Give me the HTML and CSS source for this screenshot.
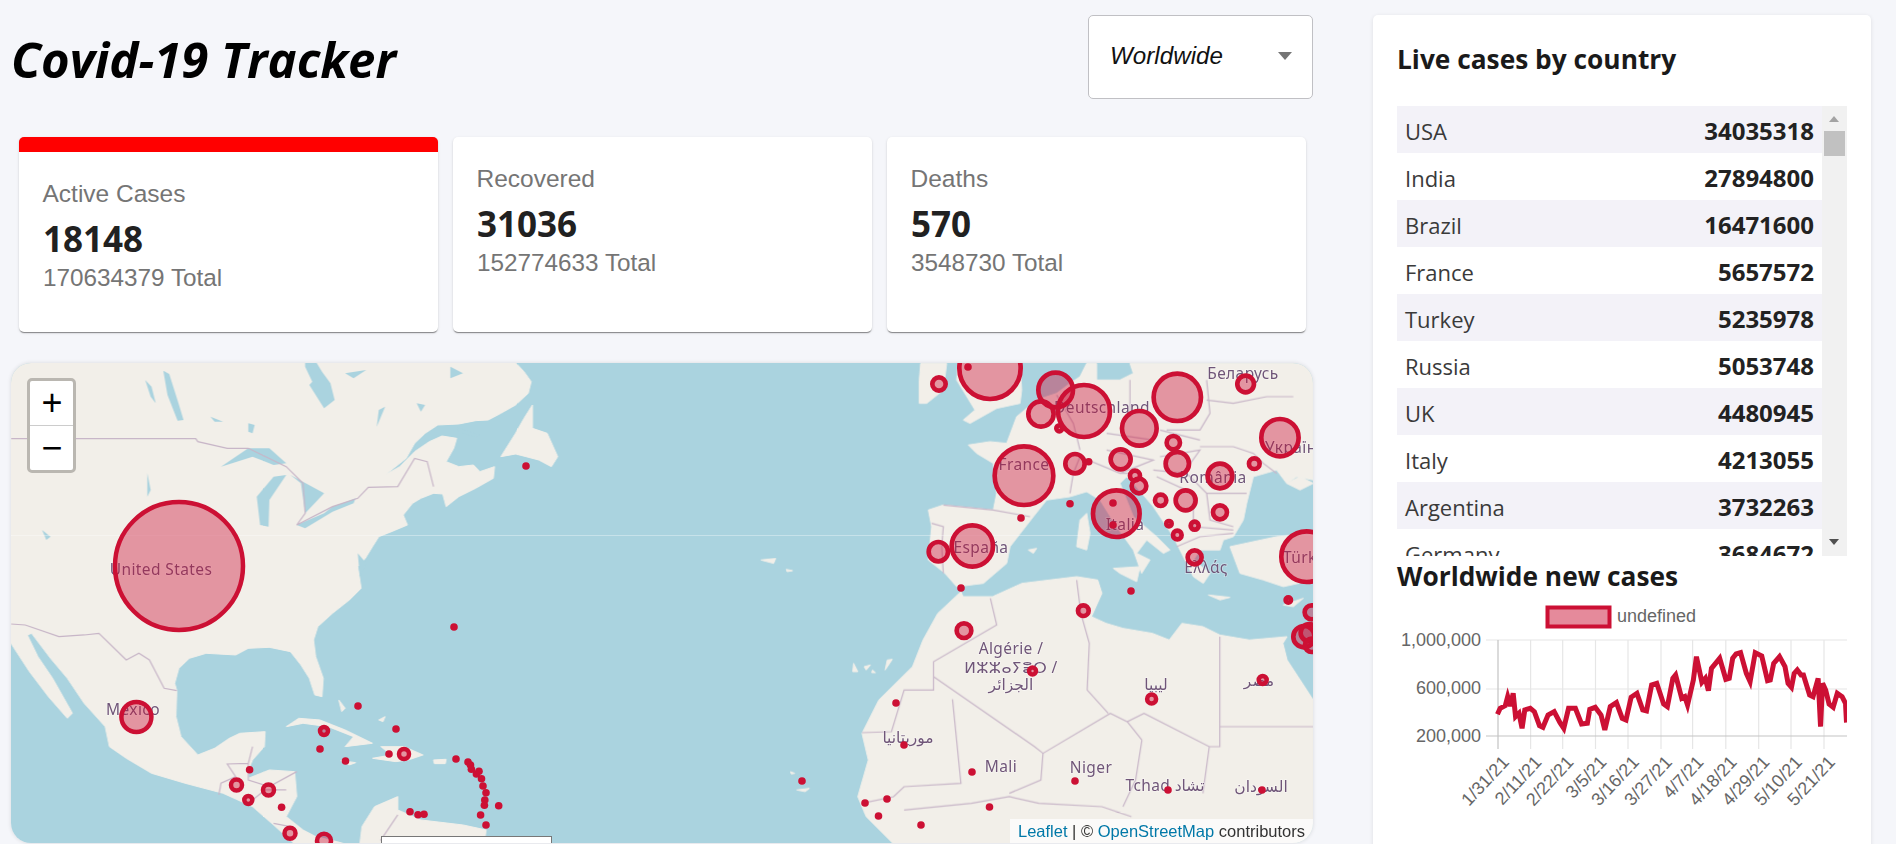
FILE: index.html
```html
<!DOCTYPE html>
<html lang="en">
<head>
<meta charset="utf-8">
<title>Covid-19 Tracker</title>
<link rel="stylesheet" href="styles.css">
</head>
<body>
<div class="app">
  <main class="left">
    <header class="header">
      <h1 class="title">Covid-19 Tracker</h1>
      <div class="select"><span class="select-value">Worldwide</span><span class="select-arrow"></span></div>
    </header>
    <section class="stats">
      <article class="stat stat-active">
        <div class="stat-label">Active Cases</div>
        <div class="stat-num">18148</div>
        <div class="stat-total">170634379 Total</div>
      </article>
      <article class="stat">
        <div class="stat-label">Recovered</div>
        <div class="stat-num">31036</div>
        <div class="stat-total">152774633 Total</div>
      </article>
      <article class="stat">
        <div class="stat-label">Deaths</div>
        <div class="stat-num">570</div>
        <div class="stat-total">3548730 Total</div>
      </article>
    </section>
    <section class="map">
      <svg class="map-svg" viewBox="11 363 1302 480" width="1302" height="480" aria-hidden="true">
        <rect class="water" x="11" y="363" width="1302" height="480"/>
        <g class="tiles">
          <g transform="translate(0 350) scale(.4209 .3333)">
            <path class="land" d="M26 38L1225 38L1245 65L1262 95L1255 130L1225 165L1190 190L1160 210L1130 212L1090 222L1040 225L1010 250L985 280L965 325L935 355L915 375L950 350L985 305L1020 275L1050 258L1085 265L1078 295L1060 335L1090 350L1125 345L1140 365L1175 350L1172 385L1130 415L1090 440L1060 470L1052 432L1030 430L1000 445L980 460L958 495L968 525L930 545L900 560L885 590L868 625L850 650L858 715L830 750L790 790L755 830L745 870L750 920L768 985L765 1040L748 1035L735 985L715 945L690 905L640 892L590 895L560 915L490 910L450 925L425 955L415 1000L420 1022L418 1100L430 1160L470 1215L510 1195L545 1165L570 1150L630 1145L628 1190L600 1230L590 1260L590 1285L640 1260L700 1265L705 1340L680 1400L720 1440L750 1460L800 1475L820 1482L700 1482L650 1425L600 1370L530 1330L440 1300L360 1270L300 1225L260 1190L250 1130L200 1060L160 985L120 925L75 850L65 855L90 920L125 985L172 1090L160 1105L115 1040L70 965L26 880Z"/>
            <path class="land" d="M855 1482L860 1430L890 1370L945 1340L945 1380L1000 1410L1100 1425L1155 1440L1150 1482Z"/>
            <path class="land" d="M1265 165L1245 205L1225 250L1190 320L1225 312L1250 320L1280 330L1310 350L1325 320L1300 250L1265 235Z"/>
            <path class="land" d="M680 1130L710 1105L760 1110L820 1140L885 1180L820 1190L840 1160L780 1130L720 1120Z"/>
            <path class="land" d="M905 1190L960 1190L1005 1215L970 1230L940 1235L885 1225L930 1215Z"/>
            <path class="land" d="M810 1232L845 1238L830 1245ZM1030 1230L1060 1228L1058 1241L1032 1241ZM805 1050L820 1075L812 1085ZM900 1110L915 1100L910 1115Z"/>
            <path class="water" d="M725 50L742 95L735 105L770 175L795 150L785 100L765 65L752 38L725 38ZM388 62L402 72L424 160L436 210L422 212L398 135ZM345 90L360 110L370 160L358 140ZM525 350L560 320L590 295L640 295L680 340L650 345L600 320ZM610 440L650 380L680 375L640 450L638 530L618 525ZM690 375L770 430L725 490L715 400ZM705 525L770 490L790 470L845 445L840 460L790 485L725 535ZM590 220L605 225L600 250L590 245ZM1085 232L1138 255L1130 262L1090 245ZM100 540L120 560L110 570ZM820 70L870 60L840 85ZM1070 50L1100 70L1070 85ZM900 180L915 170L895 230ZM990 160L1010 165L1000 185ZM500 200L530 215L510 215ZM350 370L358 420L350 440ZM850 610L870 640L855 680Z"/>
            <path class="bd" d="M26 266L465 266L470 275L540 295L590 295L680 350L720 400L725 490L705 525L790 470L850 445L875 412L945 410L985 325L1015 335L1030 410"/>
            <path class="bd" d="M26 822L60 825L140 860L200 855L235 850L300 930L330 910L355 930L390 1015L420 1022"/>
            <path class="bd" d="M600 1190L590 1240L540 1242L560 1280L525 1300L520 1335M590 1240L590 1290L640 1310L705 1265M600 1350L630 1320L680 1320M650 1420L690 1430M945 1395L905 1470L915 1482"/>
          </g>
          <g transform="translate(660 350) scale(.4209 .3333)">
            <path class="land" d="M715 725L660 790L625 870L600 950L520 1050L480 1150L495 1230L470 1340L490 1400L555 1482L1552 1482L1552 1050L1490 930L1480 880L1490 860L1400 870L1330 855L1290 830L1240 820L1210 870L1170 850L1100 835L1060 820L1025 800L1050 730L1040 690L990 680L860 700L790 740L720 740Z"/>
            <path class="land" d="M240 630L275 625L270 640ZM300 658L315 662L302 665ZM460 940L470 965L458 965ZM485 950L500 945L490 960ZM540 930L552 928L535 960ZM505 960L512 968L503 968ZM325 1320L355 1315L345 1325ZM310 1265L320 1270L312 1272Z"/>
            <path class="bd" d="M650 980L890 1190L910 1210L1070 1090L1110 1115L1150 1090L1305 1190L1330 1190L1330 1130L1552 1130M1330 860L1330 1130M695 1048L715 1300L580 1310L555 1340L480 1360M650 980L650 1020L580 1020L550 1145L480 1148M910 1210L905 1290L830 1330M1145 1170L1130 1290L1100 1370M1305 1190L1290 1330M1110 1115L1145 1170M990 690L1000 790L1020 880L1015 1020L1065 1090M785 745L800 825L650 935L650 980M580 1380L740 1360L830 1340L900 1360L1050 1370L1120 1400"/>
          </g>
          <g transform="translate(900 360) scale(.3333)">
            <path class="land" d="M205 255L270 245L320 250L350 170L410 120L470 100L510 70L540 50L560 10L590 10L590 60L660 60L700 40L690 10L1240 10L1240 360L1190 350L1160 370L1130 330L1060 350L1040 430L1030 480L1000 530L970 540L960 570L900 570L880 600L930 640L910 670L880 650L860 610L820 530L760 440L700 370L680 350L660 370L700 470L770 530L810 570L790 580L740 540L710 580L750 600L725 640L700 570L650 500L600 420L560 395L510 410L440 420L400 470L330 560L320 610L250 670L170 680L135 640L85 600L95 500L85 450L130 435L280 450L290 400L280 310L230 280Z"/>
            <path class="land" d="M62 10L140 10L130 90L80 130L58 130L58 60ZM175 10L360 10L365 90L360 130L290 145L210 190L190 180L225 150L170 60Z"/>
            <path class="land" d="M1240 520L1130 530L990 560L1020 640L1090 660L1150 680L1240 660ZM1240 370L1200 390L1160 370L1200 350Z"/>
            <path class="land" d="M540 480L560 460L570 520L560 570L530 560ZM640 625L720 620L710 665L660 640ZM925 705L990 712L960 720ZM1150 735L1210 715L1180 740ZM385 570L410 565L400 580Z"/>
            <path class="bd" d="M130 435L280 450L390 470M95 490L130 500L125 560L130 640M470 105L520 190L540 270M540 290L520 340L510 400M690 60L690 170M620 220L760 240M920 60L930 160L900 210L800 210M780 210L900 240M920 120L1000 130L1100 110L1180 110M900 260L1000 260L1060 280L1090 310L1130 340M780 290L900 270L850 340L760 330M860 340L920 400L1040 400M920 400L930 480L1000 500M770 350L880 400L880 500L1000 510M830 560L900 530L1000 520M540 290L660 340L690 340M620 270L760 300L660 340"/>
          </g>
          <rect class="seam" x="11" y="535" width="1302" height="1"/>
        </g>
        <g class="labels">
          <text class="lbl" x="161" y="575">United States</text>
          <text class="lbl" x="133" y="715">Mexico</text>
          <text class="lbl" x="1243" y="379">Беларусь</text>
          <text class="lbl" x="1102" y="413">Deutschland</text>
          <text class="lbl lbl-start" x="1265" y="453">Україна</text>
          <text class="lbl" x="1024" y="470">France</text>
          <text class="lbl" x="1213" y="483">România</text>
          <text class="lbl" x="1125" y="530">Italia</text>
          <text class="lbl" x="981" y="553">España</text>
          <text class="lbl lbl-start" x="1283" y="563">Türkiye</text>
          <text class="lbl" x="1206" y="573">Ελλάς</text>
          <text class="lbl" x="1011" y="654">Algérie /</text>
          <text class="lbl" x="1011" y="673">ⵍⵣⵣⴰⵢⴻⵔ /</text>
          <text class="lbl" x="1011" y="690">الجزائر</text>
          <text class="lbl" x="1156" y="690">ليبيا</text>
          <text class="lbl" x="1259" y="686">مصر</text>
          <text class="lbl" x="908" y="743">موريتانيا</text>
          <text class="lbl" x="1001" y="772">Mali</text>
          <text class="lbl" x="1091" y="773">Niger</text>
          <text class="lbl" x="1165" y="791">Tchad تشاد</text>
          <text class="lbl" x="1261" y="792">السودان</text>
        </g>
        <g class="bubbles">
          <circle cx="179" cy="566" r="64"/>
          <circle cx="136.4" cy="717" r="15"/>
          <circle class="ring" cx="324" cy="731" r="4"/>
          <circle class="ring" cx="404" cy="754" r="5"/>
          <circle class="ring" cx="236.5" cy="785" r="5.5"/>
          <circle class="ring" cx="268.5" cy="790" r="5.5"/>
          <circle class="ring" cx="248.3" cy="800" r="4"/>
          <circle class="ring" cx="290" cy="833.3" r="5.5"/>
          <circle class="ring" cx="324" cy="840.7" r="7"/>
          <circle class="ring" cx="1151.6" cy="699" r="4.5"/>
          <circle class="ring" cx="1262.7" cy="680" r="4"/>
          <circle class="ring" cx="1032.5" cy="671" r="3.5"/>
          <g class="dots">
            <circle cx="526" cy="466" r="3.8"/><circle cx="454" cy="627" r="3.8"/><circle cx="358" cy="706" r="3.8"/><circle cx="396" cy="729" r="3.8"/><circle cx="320" cy="749" r="3.8"/><circle cx="345.5" cy="761" r="3.8"/><circle cx="389" cy="754" r="3.8"/><circle cx="456" cy="759" r="3.8"/><circle cx="468" cy="762" r="3.8"/><circle cx="470.5" cy="765" r="3.8"/><circle cx="471.4" cy="769.3" r="3.8"/><circle cx="476.4" cy="774" r="3.8"/><circle cx="479" cy="771.3" r="3.8"/><circle cx="481.5" cy="778.7" r="3.8"/><circle cx="483" cy="786" r="3.8"/><circle cx="486" cy="792.7" r="3.8"/><circle cx="484.8" cy="800" r="3.8"/><circle cx="484.4" cy="805.3" r="3.8"/><circle cx="498.7" cy="805.7" r="3.8"/><circle cx="480.6" cy="815" r="3.8"/><circle cx="486" cy="825" r="3.8"/><circle cx="410" cy="811.7" r="3.8"/><circle cx="418" cy="814.7" r="3.8"/><circle cx="424" cy="814.3" r="3.8"/><circle cx="249.6" cy="769.7" r="3.8"/><circle cx="281.6" cy="807.3" r="3.8"/>
            <circle cx="896" cy="703" r="3.8"/><circle cx="904" cy="745" r="3.8"/><circle cx="972" cy="772" r="3.8"/><circle cx="1075" cy="781" r="3.8"/><circle cx="1168" cy="790" r="3.8"/><circle cx="1262" cy="790" r="3.8"/><circle cx="802" cy="781" r="3.8"/><circle cx="865" cy="803" r="3.8"/><circle cx="887" cy="799" r="3.8"/><circle cx="878.5" cy="816" r="3.8"/><circle cx="921" cy="825" r="3.8"/><circle cx="989.5" cy="807" r="3.8"/>
          </g>
          <g transform="translate(900 360) scale(.3333)" class="eu">
            <circle cx="270" cy="25" r="92"/><circle cx="117" cy="72" r="20"/><circle cx="467" cy="90" r="52"/><circle cx="423" cy="162" r="38"/><circle cx="552" cy="153" r="78"/><circle cx="478" cy="205" r="9"/><circle cx="372" cy="347" r="88"/><circle cx="525" cy="311" r="29"/><circle cx="832" cy="112" r="71"/><circle cx="718" cy="205" r="52"/><circle cx="820" cy="248" r="20"/><circle cx="832" cy="311" r="35"/><circle cx="662" cy="298" r="30"/><circle cx="705" cy="347" r="15"/><circle cx="717" cy="378" r="22"/><circle cx="960" cy="348" r="37"/><circle cx="1063" cy="311" r="16"/><circle cx="1140" cy="233" r="56"/><circle cx="1037" cy="72" r="25"/><circle cx="857" cy="421" r="30"/><circle cx="782" cy="421" r="17"/><circle cx="960" cy="457" r="21"/><circle cx="807" cy="491" r="8"/><circle cx="884" cy="497" r="12"/><circle cx="832" cy="525" r="13"/><circle cx="884" cy="592" r="21"/><circle cx="649" cy="461" r="70"/><circle cx="217" cy="558" r="62"/><circle cx="115" cy="575" r="29"/><circle cx="1220" cy="590" r="76"/><circle cx="1165" cy="720" r="8"/><circle cx="550" cy="752" r="16"/><circle cx="192" cy="812" r="22"/><circle cx="1235" cy="757" r="21"/><circle cx="1212" cy="830" r="32"/><circle cx="1228" cy="818" r="26"/><circle cx="1235" cy="856" r="20"/>
          </g>
          <g class="dots">
            <circle cx="968" cy="367" r="3.8"/><circle cx="1088.7" cy="461.7" r="3.8"/><circle cx="1113" cy="503" r="3.8"/><circle cx="1113" cy="525" r="3.8"/><circle cx="1070" cy="503.7" r="3.8"/><circle cx="1021" cy="518" r="3.8"/><circle cx="961" cy="588" r="3.8"/><circle cx="1131" cy="591" r="3.8"/>
          </g>
        </g>
      </svg>
      <div class="zoom">
        <div class="zoom-btn">+</div>
        <div class="zoom-btn">−</div>
      </div>
      <div class="attribution"><a class="attr-link">Leaflet</a> | © <a class="attr-link">OpenStreetMap</a> contributors</div>
      <div class="popup"></div>
    </section>
  </main>
  <aside class="side">
    <h2 class="side-title">Live cases by country</h2>
    <div class="table-wrap">
      <div class="table">
        <div class="row"><span>USA</span><strong>34035318</strong></div>
        <div class="row"><span>India</span><strong>27894800</strong></div>
        <div class="row"><span>Brazil</span><strong>16471600</strong></div>
        <div class="row"><span>France</span><strong>5657572</strong></div>
        <div class="row"><span>Turkey</span><strong>5235978</strong></div>
        <div class="row"><span>Russia</span><strong>5053748</strong></div>
        <div class="row"><span>UK</span><strong>4480945</strong></div>
        <div class="row"><span>Italy</span><strong>4213055</strong></div>
        <div class="row"><span>Argentina</span><strong>3732263</strong></div>
        <div class="row"><span>Germany</span><strong>3684672</strong></div>
      </div>
      <div class="scrollbar">
        <span class="sb-up"></span>
        <span class="sb-thumb"></span>
        <span class="sb-down"></span>
      </div>
    </div>
    <h2 class="side-title chart-title">Worldwide new cases</h2>
    <svg class="chart" viewBox="1397 598 450 225" width="450" height="225" aria-hidden="true">
      <rect class="legend-box" x="1547.5" y="607.5" width="62" height="19"/>
      <text class="legend-text" x="1617" y="622">undefined</text>
      <g class="grid">
        <path d="M1486 640H1847M1486 689H1847"/>
        <path d="M1530.6 640V749M1562.7 640V749M1595.5 640V749M1628 640V749M1661 640V749M1692.6 640V749M1725.8 640V749M1758.7 640V749M1791 640V749M1824 640V749"/>
      </g>
      <path class="axis" d="M1498 640V749M1486 736H1847"/>
      <text class="y-tick" x="1481" y="646">1,000,000</text>
      <text class="y-tick" x="1481" y="694">600,000</text>
      <text class="y-tick" x="1481" y="742">200,000</text>
      <g class="x-ticks">
        <text transform="rotate(-47 1510 763)" x="1510" y="763">1/31/21</text>
        <text transform="rotate(-47 1542.6 763)" x="1542.6" y="763">2/11/21</text>
        <text transform="rotate(-47 1574.7 763)" x="1574.7" y="763">2/22/21</text>
        <text transform="rotate(-47 1607.5 763)" x="1607.5" y="763">3/5/21</text>
        <text transform="rotate(-47 1640 763)" x="1640" y="763">3/16/21</text>
        <text transform="rotate(-47 1673 763)" x="1673" y="763">3/27/21</text>
        <text transform="rotate(-47 1704.6 763)" x="1704.6" y="763">4/7/21</text>
        <text transform="rotate(-47 1737.8 763)" x="1737.8" y="763">4/18/21</text>
        <text transform="rotate(-47 1770.7 763)" x="1770.7" y="763">4/29/21</text>
        <text transform="rotate(-47 1803 763)" x="1803" y="763">5/10/21</text>
        <text transform="rotate(-47 1836 763)" x="1836" y="763">5/21/21</text>
      </g>
      <g transform="translate(1360 500) scale(.3419 .3333)">
        <polyline class="line" points="402,643 410,625 425,617 432,590 440,618 448,580 455,650 465,640 474,685 482,630 498,625 510,635 525,677 535,682 550,645 568,635 585,668 596,685 610,625 630,625 648,672 665,670 672,628 688,622 705,645 716,690 732,620 750,608 767,655 778,660 793,592 810,580 827,630 838,633 853,555 868,550 888,612 899,620 915,535 923,525 941,595 950,590 958,615 975,540 984,470 1000,547 1010,535 1019,572 1028,505 1040,490 1052,475 1070,538 1080,535 1090,475 1100,462 1113,458 1130,520 1141,545 1156,458 1175,468 1192,542 1200,540 1210,490 1227,470 1243,500 1252,550 1262,562 1270,520 1279,510 1290,525 1297,525 1315,585 1325,590 1340,535 1347,680 1353,550 1362,570 1372,612 1384,622 1396,580 1410,590 1420,610 1423,668"/>
      </g>
    </svg>
  </aside>
</div>
</body>
</html>
```
FILE: styles.css
```css
* { box-sizing: border-box; }
html, body { margin: 0; height: 844px; overflow: hidden; }
body { background: #f5f6fa; font-family: "Liberation Sans", Arial, sans-serif; }

.app { display: flex; gap: 60px; height: 844px; padding: 15px 25px 0 11px; overflow: hidden; }
.left { width: 1302px; flex: none; display: flex; flex-direction: column; }

.header { display: flex; justify-content: space-between; align-items: center; height: 84px; margin-bottom: 38px; }
.title { margin: 0; font: italic 700 49px/60px "Open Sans", sans-serif; color: #000; position: relative; top: 2px; }
.select { width: 225px; height: 84px; display: flex; align-items: center; justify-content: space-between; padding: 0 20px 2px 21px; background: #fff; border: 1px solid #c0c0c4; border-radius: 5px; }
.select-value { font-style: italic; font-size: 24.2px; color: #111; }
.select-arrow { width: 0; height: 0; border-left: 7px solid transparent; border-right: 7px solid transparent; border-top: 8px solid #757575; }

.stats { display: flex; gap: 15px; padding: 0 7px 0 8px; height: 195px; margin-bottom: 31px; }
.stat { flex: 1; background: #fff; border-radius: 5px; padding: 28px 24px 0; box-shadow: 0 2px 1px -1px rgba(0,0,0,.3), 0 1px 1px 0 rgba(0,0,0,.14), 0 1px 3px 0 rgba(0,0,0,.12); overflow: hidden; }
.stat-active { border-top: 15px solid #f00; }
.stat-label { font-size: 24.5px; line-height: 28px; color: #757575; margin-left: -.5px; }
.stat-num { font: 700 35px/48px "Open Sans", sans-serif; color: #212121; margin-top: 7px; }
.stat-total { font-size: 24.3px; line-height: 28px; color: #757575; margin-top: 1px; }

.map { position: relative; height: 480px; border-radius: 20px; overflow: hidden; box-shadow: 0 0 4px rgba(0,0,0,.12); }
.map-svg { display: block; }
.water { fill: #aad3df; }
.land { fill: #f2efe9; stroke: #f2efe9; stroke-width: 1px; stroke-linejoin: round; vector-effect: non-scaling-stroke; }
.tiles { filter: blur(.5px); }
.bd { fill: none; stroke: #c8b6c8; stroke-width: 1.2px; vector-effect: non-scaling-stroke; }
.seam { fill: rgba(255,255,255,.35); }
.lbl { font: 15.5px "Noto Sans", "DejaVu Sans", sans-serif; fill: #6f5578; text-anchor: middle; letter-spacing: .4px; paint-order: stroke; stroke: rgba(255,255,255,.4); stroke-width: 1.5px; }
.lbl-start { text-anchor: start; }
.bubbles circle { fill: rgba(204,16,52,.4); stroke: #cc1034; stroke-width: 4.5px; }
.bubbles .eu circle { stroke-width: 14px; }
.bubbles .dots circle { fill: #cc1034; stroke: none; }
.bubbles .ring { stroke-width: 4.5px; }

.zoom { position: absolute; left: 16px; top: 15px; width: 49px; height: 95px; background: #fff; border: 3px solid #bab7b1; border-radius: 5px; display: flex; flex-direction: column; }
.zoom-btn { flex: 1; display: flex; align-items: center; justify-content: center; padding-left: 1px; font: 36px/1 "Liberation Sans", sans-serif; color: #000; }
.zoom-btn + .zoom-btn { border-top: 1px solid #ccc; }

.attribution { position: absolute; right: 0; bottom: 0; height: 24px; padding: 0 8px; font-size: 16.5px; line-height: 24px; color: #333; background: rgba(255,255,255,.7); white-space: nowrap; }
.attr-link { color: #0078a8; }
.popup { position: absolute; left: 370px; top: 473px; width: 171px; height: 30px; background: #fff; border: 1px solid #777; }

.side { width: 498px; flex: none; height: 860px; background: #fff; border-radius: 5px; padding: 27px 24px 0; box-shadow: 0 1px 4px rgba(0,0,0,.1); }
.side-title { margin: 0 0 30px; font: 700 26.3px/34px "Open Sans", sans-serif; color: #1a1a1a; }
.table-wrap { display: flex; height: 450px; overflow: hidden; }
.table { flex: 1; }
.row { display: flex; justify-content: space-between; align-items: center; height: 47px; padding: 2px 8px 0; font: 22px "Open Sans", sans-serif; color: #3a3a3a; }
.row:nth-child(odd) { background: #f3f2f8; }
.row strong { font-weight: 700; font-size: 24px; color: #222; }
.scrollbar { width: 25px; flex: none; background: #f1f1f1; position: relative; }
.sb-up, .sb-down { position: absolute; left: 7px; width: 0; height: 0; border-left: 5.5px solid transparent; border-right: 5.5px solid transparent; }
.sb-up { top: 10px; border-bottom: 6px solid #a3a3a3; }
.sb-down { bottom: 11px; border-top: 6px solid #505050; }
.sb-thumb { position: absolute; left: 2px; right: 2px; top: 25px; height: 25px; background: #c1c1c1; }

.chart-title { margin: 0 0 2px; line-height: 40px; }
.chart { display: block; }
.legend-box { fill: #e58a9b; stroke: #cc1034; stroke-width: 4px; }
.legend-text { font-size: 18px; fill: #666; }
.grid path { fill: none; stroke: #e6e6e6; stroke-width: 1.2px; }
.axis { fill: none; stroke: #c4c4c4; stroke-width: 1.2px; }
.y-tick { font-size: 18px; fill: #666; text-anchor: end; }
.x-ticks text { font-size: 18px; fill: #666; text-anchor: end; }
.line { fill: none; stroke: #cc1034; stroke-width: 5px; stroke-linejoin: miter; vector-effect: non-scaling-stroke; }
```
